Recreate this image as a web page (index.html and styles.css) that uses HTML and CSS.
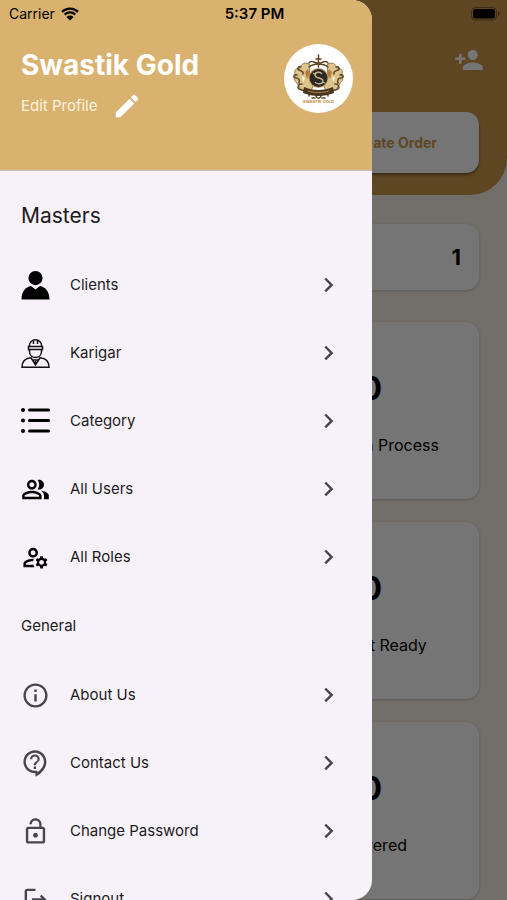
FILE: index.html
```html
<!DOCTYPE html>
<html lang="en">
<head>
<meta charset="utf-8">
<meta name="viewport" content="width=device-width, initial-scale=1">
<title>Swastik Gold</title>
<link rel="stylesheet" href="styles.css">
</head>
<body>
<svg class="sprite" aria-hidden="true">
  <symbol id="chevron" viewBox="0 0 24 24"><path d="M10 5.500 8.590 6.910 13.170 11.500l-4.580 4.590L10 17.500l6-6z"/></symbol>
</svg>

<main class="dashboard">
  <header class="top">
    <button class="add-user" aria-label="Add user">
      <svg viewBox="0 0 24 24"><path d="M15 12c2.210 0 4-1.790 4-4s-1.790-4-4-4-4 1.790-4 4 1.790 4 4 4zm-9-2V7H4v3H1v2h3v3h2v-3h3v-2H6zm9 4c-2.670 0-8 1.340-8 4v2h16v-2c0-2.660-5.330-4-8-4z"/></svg>
    </button>
    <button class="create-order">
      <svg viewBox="0 0 24 24"><path d="M19 13h-6v6h-2v-6H5v-2h6V5h2v6h6v2z"/></svg>
      Create Order
    </button>
  </header>
  <section class="stats">
    <article class="card total"><strong>1</strong></article>
    <article class="card stat"><strong>0</strong><span>Orders In Process</span></article>
    <article class="card stat"><strong>0</strong><span>Product Ready</span></article>
    <article class="card stat"><strong>0</strong><span>Delivered</span></article>
  </section>
</main>

<div class="scrim"></div>

<aside class="drawer">
  <header class="profile">
    <div class="who">
      <h1>Swastik Gold</h1>
      <button class="edit">Edit Profile
        <svg viewBox="0 0 24 24"><path d="M3 17.250V21h3.750L17.810 9.940l-3.750-3.750L3 17.250zM20.710 7.040a1 1 0 0 0 0-1.410l-2.340-2.340a1 1 0 0 0-1.410 0l-1.830 1.830 3.750 3.750 1.830-1.830z"/></svg>
      </button>
    </div>
    <svg class="avatar" viewBox="0 0 69 69" role="img" aria-label="Swastik Gold logo">
      <circle cx="34.500" cy="34.500" r="34.500" fill="#fff"/>
      <g fill="#dcc48d" stroke="#806638" stroke-width=".8">
        <path d="M26 21c-5-4-9-1-10 3-5 0-7 4-4 7-3 3-2 6 1 8l4 7 9 3 4-9-5-8z"/>
        <path d="M43 21c5-4 9-1 10 3 5 0 7 4 4 7 3 3 2 6-1 8l-4 7-9 3-4-9 5-8z"/>
      </g>
      <g fill="none" stroke="#5e4626" stroke-width="1.500" stroke-linecap="round">
        <path d="M17 23c-3-1-4 2-2 3s5 1 4 4M13 31c-4-1-4 3-1 3s4 2 3 5M18 40c-4 0-5 3-3 5s5 0 7 3M52 23c3-1 4 2 2 3s-5 1-4 4M56 31c4-1 4 3 1 3s-4 2-3 5M51 40c4 0 5 3 3 5s-5 0-7 3"/>
        <path d="M34.500 11v12M32 15h5M25 19c3-4 6 1 9 0 4 1 7-4 10 0M25 23c5-4 14-4 19 0M25 52c0-5 6-4 7 0 1 3 4 3 5 0 1-4 7-5 7 0M28 54h3M38 54h3"/>
      </g>
      <path d="m21 28 3-3 2 5-3 5zm27 0-3-3-2 5 3 5z" fill="#b57e37"/>
      <path d="m18 32 3 2-2 4zm33 0-3 2 2 4z" fill="#fff7de"/>
      <path d="M20 43c9 4 20 4 29 0l1 6c-10 4-21 4-31 0z" fill="#49351f"/>
      <path d="M24 47c7 2 14 2 21 0" fill="none" stroke="#a88a53"/>
      <circle cx="34.500" cy="34" r="10" fill="#c9a261"/>
      <circle cx="34.500" cy="34" r="9" fill="#2d2824"/>
      <path d="M38 30c-2-3-7-2-7 1 0 4 8 2 8 6 0 3-6 4-8 1M29 29l3 2M38 38l3 1" fill="none" stroke="#cdbb90" stroke-width="1.300"/>
      <text x="34.500" y="59" text-anchor="middle" class="logo-name">SWASTIK GOLD</text>
    </svg>
  </header>

  <nav class="menu">
    <h2>Masters</h2>
    <a href="#clients"><svg class="solid" viewBox="0 0 29 29"><circle cx="14.500" cy="7.100" r="7.100"/><path d="M.500 28.500c0-8 4-12.500 9.500-13.500l4.500 3.500L19 15c5.500 1 9.500 5.500 9.500 13.500z"/></svg><span>Clients</span><svg class="chevron"><use href="#chevron"/></svg></a>
    <a href="#karigar"><svg class="line" viewBox="0 0 29 29"><path d="M8.200 7.500C8.200-1.500 20.800-1.500 20.800 7.500M7.500 7.500h14v3h-14zM8.500 10.500v2c0 8 12 8 12 0v-2M12.500 1v4M16.500 1v4M1 28.300c0-6 3-9 9-9.500l4.500 7 4.500-7c6 .5 9 3.500 9 9.500zM11.500 21h6M14.500 22v4"/></svg><span>Karigar</span><svg class="chevron"><use href="#chevron"/></svg></a>
    <a href="#category"><svg class="list" viewBox="0 0 29 29"><path d="M8.500 3h19M8.500 13.500h19M8.500 24h19" /><circle cx="2" cy="3" r="2"/><circle cx="2" cy="13.500" r="2"/><circle cx="2" cy="24" r="2"/></svg><span>Category</span><svg class="chevron"><use href="#chevron"/></svg></a>
    <a href="#users"><svg class="solid" viewBox="0 0 24 24"><path d="M16.670 13.130C18.040 14.060 19 15.320 19 17v3h4v-3c0-2.180-3.570-3.470-6.330-3.870zM15 12c2.210 0 4-1.790 4-4s-1.790-4-4-4c-.47 0-.91.1-1.330.24C14.500 5.270 15 6.580 15 8s-.5 2.730-1.330 3.760c.42.14.86.24 1.330.24zM9 12c2.210 0 4-1.790 4-4s-1.790-4-4-4-4 1.790-4 4 1.790 4 4 4zm0-6c1.100 0 2 .9 2 2s-.9 2-2 2-2-.9-2-2 .9-2 2-2zM9 13c-2.670 0-8 1.340-8 4v3h16v-3c0-2.660-5.330-4-8-4zm6 5H3v-.99C3.200 16.290 6.300 15 9 15s5.800 1.290 6 2v1z"/></svg><span>All Users</span><svg class="chevron"><use href="#chevron"/></svg></a>
    <a href="#roles"><svg class="solid" viewBox="0 0 24 24"><path d="M4 18v-.65c0-.34.16-.66.41-.81C6.100 15.530 8.030 15 10 15c.03 0 .05 0 .08.01.1-.7.3-1.370.59-1.980-.22-.02-.44-.03-.67-.03-2.420 0-4.680.67-6.610 1.820-.88.52-1.390 1.500-1.390 2.530V20h9.260c-.42-.6-.75-1.280-.97-2H4zM10 12c2.210 0 4-1.790 4-4s-1.790-4-4-4-4 1.790-4 4 1.790 4 4 4zm0-6c1.100 0 2 .9 2 2s-.9 2-2 2-2-.9-2-2 .9-2 2-2zM20.750 16c0-.22-.03-.42-.06-.63l1.140-1.010-1-1.730-1.450.49c-.32-.27-.68-.48-1.080-.63L18 11h-2l-.3 1.490c-.4.15-.76.36-1.080.63l-1.450-.49-1 1.730 1.140 1.010c-.03.21-.06.41-.06.63s.03.42.06.63l-1.140 1.010 1 1.730 1.450-.49c.32.27.68.48 1.080.63L16 21h2l.3-1.490c.4-.15.76-.36 1.080-.63l1.450.49 1-1.730-1.140-1.010c.03-.21.06-.41.06-.63zM17 18c-1.100 0-2-.9-2-2s.9-2 2-2 2 .9 2 2-.9 2-2 2z"/></svg><span>All Roles</span><svg class="chevron"><use href="#chevron"/></svg></a>
    <h3>General</h3>
    <a href="#about"><svg viewBox="0 0 24 24"><path d="M11 7h2v2h-2zm0 4h2v6h-2zm1-9C6.480 2 2 6.480 2 12s4.480 10 10 10 10-4.480 10-10S17.520 2 12 2zm0 18c-4.410 0-8-3.590-8-8s3.590-8 8-8 8 3.590 8 8-3.590 8-8 8z"/></svg><span>About Us</span><svg class="chevron"><use href="#chevron"/></svg></a>
    <a href="#contact"><svg viewBox="0 0 24 24"><path fill-rule="evenodd" d="M11.500 1C6.260 1 2 5.260 2 10.500S6.260 20 11.500 20h.5v3c4.860-2.340 9-7 9-12.500C21 5.260 16.740 1 11.500 1zM13.500 19.300V18h-2C7.360 18 4 14.640 4 10.500S7.360 3 11.500 3 19 6.360 19 10.500c0 3.200-2 6.400-5.500 8.800z"/><path d="M10.500 14.500h2v2h-2zM11.500 4.500a4 4 0 0 0-4 4h1.800a2.200 2.200 0 0 1 4.400 0c0 2.200-3.200 2-3.200 5h2c0-2.300 3-2.600 3-5a4 4 0 0 0-4-4z"/></svg><span>Contact Us</span><svg class="chevron"><use href="#chevron"/></svg></a>
    <a href="#password"><svg viewBox="0 0 24 24"><path d="M12 17c1.100 0 2-.9 2-2s-.9-2-2-2-2 .9-2 2 .9 2 2 2zm6-9h-1V6c0-2.760-2.240-5-5-5S7 3.240 7 6h1.900c0-1.710 1.390-3.100 3.100-3.100s3.100 1.390 3.100 3.100v2H6c-1.100 0-2 .9-2 2v10c0 1.100.9 2 2 2h12c1.100 0 2-.9 2-2V10c0-1.100-.9-2-2-2zm0 12H6V10h12v10z"/></svg><span>Change Password</span><svg class="chevron"><use href="#chevron"/></svg></a>
    <a href="#signout"><svg viewBox="0 0 24 24"><path d="m17 8-1.410 1.410L17.170 11H9v2h8.170l-1.580 1.580L17 16l4-4-4-4zM5 5h7V3H5c-1.100 0-2 .9-2 2v14c0 1.100.9 2 2 2h7v-2H5V5z"/></svg><span>Signout</span><svg class="chevron"><use href="#chevron"/></svg></a>
  </nav>
</aside>

<div class="status">
  <span class="carrier">Carrier
    <svg viewBox="0 0 18 14" aria-hidden="true"><path d="M1 4.800a11.500 11.500 0 0 1 16 0M3.700 7.600a7.600 7.600 0 0 1 10.600 0" fill="none" stroke="#000" stroke-width="2.300"/><path d="M5.400 9.900a5.200 5.200 0 0 1 7.200 0L9 13.600z"/></svg>
  </span>
  <time>5:37 PM</time>
  <svg class="battery" viewBox="0 0 29 14" aria-hidden="true"><rect x=".5" y=".5" width="25" height="12.500" rx="4" fill="none" stroke="#000" stroke-opacity=".35"/><rect x="2" y="2" width="22" height="9.500" rx="2.500"/><path d="M27 4.500c2 .6 2 4 0 4.600z" fill-opacity=".4"/></svg>
</div>
</body>
</html>
```
FILE: styles.css
```css
* {
  box-sizing: border-box;
}

body {
  position: relative;
  height: 100vh;
  margin: 0;
  overflow: hidden;
  background: #f9efe6;
  color: #1d1b20;
  font-family: Inter, "Open Sans", sans-serif;
  font-size: 15px;
  line-height: 20px;
}

h1, h2, h3 {
  margin: 0;
}

button {
  padding: 0;
  border: 0;
  background: none;
  font: inherit;
}

svg {
  flex: none;
  fill: currentColor;
}

.sprite {
  position: absolute;
  width: 0;
  height: 0;
}

/* Dashboard behind the drawer */
.top {
  display: flex;
  flex-direction: column;
  align-items: flex-end;
  gap: 36px;
  padding: 44px 28px 22px;
  border-radius: 0 0 37px 37px;
  background: #cd9a4a;
}

.add-user {
  display: flex;
  margin-right: -5px;
  color: #fff;
}

.add-user svg {
  width: 30px;
  height: 32px;
}

.create-order {
  display: flex;
  align-items: center;
  justify-content: flex-end;
  gap: 8px;
  width: calc(50% + 10px);
  height: 61px;
  padding-right: 42px;
  border-radius: 13px;
  background: #fff;
  box-shadow: 0 2px 3px #0006;
  color: #cd9a4a;
  font-size: 14px;
  font-weight: 700;
}

.create-order svg {
  width: 24px;
  height: 24px;
}

.stats {
  display: grid;
  grid-template-columns: 1fr 1fr;
  gap: 23px 20px;
  padding: 29px 28px;
}

.card {
  border-radius: 13px;
  background: #fff;
  box-shadow: 0 1px 3px #0003;
  color: #000;
}

.total {
  display: flex;
  grid-column: 1 / -1;
  align-items: center;
  justify-content: flex-end;
  height: 66px;
  margin-bottom: 9px;
  padding: 0 18px;
  font-size: 22px;
}

.stat {
  display: flex;
  grid-column: 2;
  flex-direction: column;
  align-items: center;
  justify-content: center;
  gap: 28px;
  height: 177px;
  padding-top: 4px;
  font-size: 16px;
}

.stat strong {
  font-size: 32px;
  line-height: 36px;
}

.scrim {
  position: absolute;
  inset: 0;
  background: rgba(0, 0, 0, 0.54);
}

/* Navigation drawer */
.drawer {
  position: absolute;
  inset: 0 auto 0 0;
  display: flex;
  flex-direction: column;
  width: 73.4%;
  overflow: hidden;
  border-radius: 0 20px 20px 0;
  background: #f7f2fa;
}

.profile {
  display: flex;
  flex: none;
  align-items: flex-start;
  justify-content: space-between;
  height: 171px;
  padding: 44px 19px 0 21px;
  border-bottom: 1px solid #cbc0c0;
  background: #dab270;
  color: #fff;
}

.who {
  padding-top: 3px;
}

.profile h1 {
  font-size: 28px;
  line-height: 36px;
}

.edit {
  display: flex;
  align-items: center;
  gap: 14px;
  margin-top: 8px;
  color: #fff3df;
  font-size: 15px;
}

.edit svg {
  width: 30px;
  height: 30px;
  color: #fff;
}

.avatar {
  width: 69px;
  height: 69px;
}

.logo-name {
  fill: #c28a3c;
  font-size: 4px;
  font-weight: 700;
}

.menu {
  flex: 1;
  overflow: hidden;
  padding: 10px 29px 0 21px;
}

.menu h2,
.menu h3 {
  display: flex;
  align-items: center;
  height: 70px;
  font-weight: 400;
}

.menu h2 {
  font-size: 21px;
}

.menu h3 {
  font-size: 15px;
}

.menu a {
  display: flex;
  align-items: center;
  gap: 20px;
  height: 68px;
  color: inherit;
  text-decoration: none;
}

.menu a span {
  flex: 1;
}

.menu svg {
  width: 29px;
  height: 29px;
  color: #49454f;
}

.menu .solid,
.menu .list {
  color: #000;
}

.menu .line {
  fill: none;
  stroke: #111;
  stroke-width: 1.5;
}

.menu .list path {
  stroke: #000;
  stroke-width: 3;
  stroke-linecap: round;
}

.menu .chevron {
  color: #49454f;
}

/* Device status bar */
.status {
  position: absolute;
  inset: 0 0 auto;
  display: grid;
  grid-template-columns: 1fr auto 1fr;
  align-items: center;
  height: 28px;
  padding: 0 7px 0 9px;
  color: #000;
  font-size: 14px;
}

.carrier {
  display: flex;
  align-items: center;
  gap: 6px;
}

.carrier svg {
  width: 18px;
  height: 14px;
}

.status time {
  font-size: 15px;
  font-weight: 600;
}

.battery {
  justify-self: end;
  width: 29px;
  height: 14px;
}
```
